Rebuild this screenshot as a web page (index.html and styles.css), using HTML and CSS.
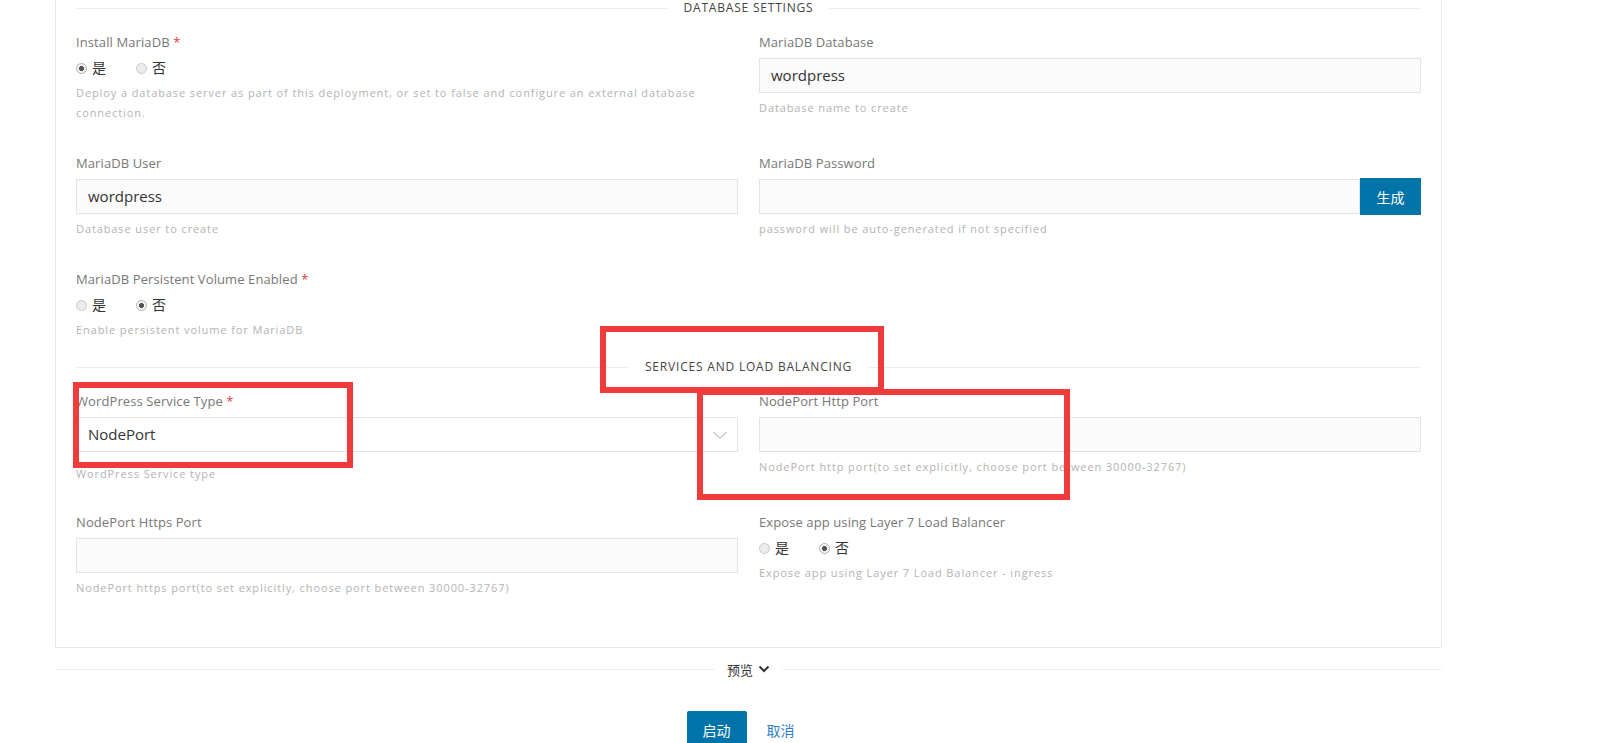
FILE: index.html
```
<!DOCTYPE html>
<html lang="zh">
<head>
<meta charset="utf-8">
<title>Deploy</title>
<link rel="stylesheet" href="styles.css">
</head>
<body>
<div class="page">
  <div class="card">
    <div class="section-title"><span>DATABASE SETTINGS</span></div>
    <div class="grid">
      <div class="field">
        <div class="label">Install MariaDB <em>*</em></div>
        <div class="radios">
          <span class="radio on"><i></i>是</span>
          <span class="radio"><i></i>否</span>
        </div>
        <div class="help">Deploy a database server as part of this deployment, or set to false and configure an external database connection.</div>
      </div>
      <div class="field">
        <div class="label">MariaDB Database</div>
        <div class="input">wordpress</div>
        <div class="help">Database name to create</div>
      </div>
      <div class="field">
        <div class="label">MariaDB User</div>
        <div class="input">wordpress</div>
        <div class="help">Database user to create</div>
      </div>
      <div class="field">
        <div class="label">MariaDB Password</div>
        <div class="input-group">
          <div class="input"></div>
          <button class="gen">生成</button>
        </div>
        <div class="help">password will be auto-generated if not specified</div>
      </div>
      <div class="field">
        <div class="label">MariaDB Persistent Volume Enabled <em>*</em></div>
        <div class="radios">
          <span class="radio"><i></i>是</span>
          <span class="radio on"><i></i>否</span>
        </div>
        <div class="help">Enable persistent volume for MariaDB</div>
      </div>
    </div>
    <div class="section-title"><span>SERVICES AND LOAD BALANCING</span></div>
    <div class="grid grid-services">
      <div class="field">
        <div class="label">WordPress Service Type <em>*</em></div>
        <div class="input select"><span>NodePort</span>
          <svg width="16" height="8" viewBox="0 0 16 8"><polyline points="1,1 8,7 15,1" fill="none" stroke="#aaa" stroke-width="1"/></svg>
        </div>
        <div class="help help-select">WordPress Service type</div>
      </div>
      <div class="field">
        <div class="label">NodePort Http Port</div>
        <div class="input"></div>
        <div class="help">NodePort http port(to set explicitly, choose port between 30000-32767)</div>
      </div>
      <div class="field">
        <div class="label">NodePort Https Port</div>
        <div class="input"></div>
        <div class="help">NodePort https port(to set explicitly, choose port between 30000-32767)</div>
      </div>
      <div class="field">
        <div class="label">Expose app using Layer 7 Load Balancer</div>
        <div class="radios">
          <span class="radio"><i></i>是</span>
          <span class="radio on"><i></i>否</span>
        </div>
        <div class="help">Expose app using Layer 7 Load Balancer - ingress</div>
      </div>
    </div>
  </div>
  <div class="preview"><span class="preview-text">预览
    <svg width="12" height="8" viewBox="0 0 12 8"><polyline points="1.5,1.5 6,6 10.5,1.5" fill="none" stroke="#333" stroke-width="2"/></svg></span></div>
  <div class="actions">
    <button class="primary">启动</button>
    <button class="cancel">取消</button>
  </div>
</div>
<div class="mark mark-a"></div>
<div class="mark mark-b"></div>
<div class="mark mark-c"></div>
</body>
</html>
```
FILE: styles.css
```
html, body {
  margin: 0;
  padding: 0;
  overflow: hidden;
  background: #fff;
}
body {
  font-family: "Open Sans", "Noto Sans CJK SC", sans-serif;
  color: #333;
}
.page {
  padding-left: 55px;
  width: 1387px;
}
.card {
  border: 1px solid #e8e8e8;
  border-top: none;
  padding: 0 20px 30px;
}
.section-title {
  height: 16px;
  display: flex;
  align-items: center;
  font-size: 12px;
  letter-spacing: 0.8px;
  color: #444;
}
.section-title::before,
.section-title::after {
  content: "";
  flex: 1;
  height: 1px;
  background: #ececec;
}
.section-title span {
  padding: 0 16px;
  line-height: 16px;
}
.grid {
  display: grid;
  grid-template-columns: 1fr 1fr;
  column-gap: 21px;
  row-gap: 31px;
  margin: 17px 0 19px;
  align-items: start;
}
.grid-services {
  row-gap: 29px;
}
.label {
  font-size: 13px;
  line-height: 18px;
  color: #777;
  letter-spacing: 0.1px;
  margin-bottom: 7px;
}
.label em {
  font-style: normal;
  color: #e4393c;
}
.input {
  height: 35px;
  box-sizing: border-box;
  border: 1px solid #e3e3e3;
  background: #fbfbfc;
  font-size: 15px;
  line-height: 33px;
  padding: 0 11px;
  color: #333;
}
.select {
  display: flex;
  align-items: center;
  justify-content: space-between;
  padding-right: 9px;
  background: #fff;
}
.select svg {
  display: block;
}
.input-group {
  display: flex;
  align-items: center;
  height: 35px;
}
.input-group .input {
  flex: 1;
}
.gen {
  width: 61px;
  height: 37px;
  border: none;
  background: #0073a8;
  color: #fff;
  font-family: "Noto Sans CJK SC", sans-serif;
  font-size: 14px;
  padding: 0;
}
.help {
  font-size: 11px;
  line-height: 20px;
  letter-spacing: 0.9px;
  color: #b3b3b3;
  margin-top: 5px;
}
.help-select {
  margin-top: 12px;
}
.radios {
  height: 20px;
  display: flex;
  align-items: center;
}
.radio {
  display: inline-flex;
  align-items: center;
  font-size: 14px;
  color: #333;
  margin-right: 30px;
  line-height: 20px;
}
.radio i {
  width: 11px;
  height: 11px;
  box-sizing: border-box;
  border-radius: 50%;
  border: 1px solid #c9c9c9;
  background: #ececec;
  margin-right: 5px;
}
.radio.on i {
  border-color: #b0b0b0;
  background: radial-gradient(circle, #555 0, #555 2.3px, #f4f4f4 2.8px);
}
.preview {
  margin-top: 10px;
  height: 22px;
  display: flex;
  align-items: center;
  font-size: 13px;
  color: #333;
}
.preview::before,
.preview::after {
  content: "";
  flex: 1;
  height: 1px;
  background: #efefef;
}
.preview-text {
  padding: 0 12px;
  display: inline-flex;
  align-items: center;
  gap: 5px;
  font-family: "Noto Sans CJK SC", sans-serif;
}
.actions {
  margin-top: 31px;
  display: flex;
  justify-content: center;
}
.primary {
  width: 60px;
  height: 38px;
  border: none;
  border-radius: 2px;
  background: #0073a8;
  color: #fff;
  font-family: "Noto Sans CJK SC", sans-serif;
  font-size: 14px;
  padding: 0;
}
.cancel {
  height: 38px;
  border: none;
  background: none;
  color: #2f7fc4;
  font-family: "Noto Sans CJK SC", sans-serif;
  font-size: 14px;
  padding: 0 16px 0 20px;
}
.mark {
  position: absolute;
  border: 6px solid #f03b3b;
  box-sizing: border-box;
}
.mark-a {
  left: 600px;
  top: 326px;
  width: 284px;
  height: 67px;
}
.mark-b {
  left: 73px;
  top: 382px;
  width: 280px;
  height: 86px;
}
.mark-c {
  left: 697px;
  top: 389px;
  width: 373px;
  height: 111px;
}
```
